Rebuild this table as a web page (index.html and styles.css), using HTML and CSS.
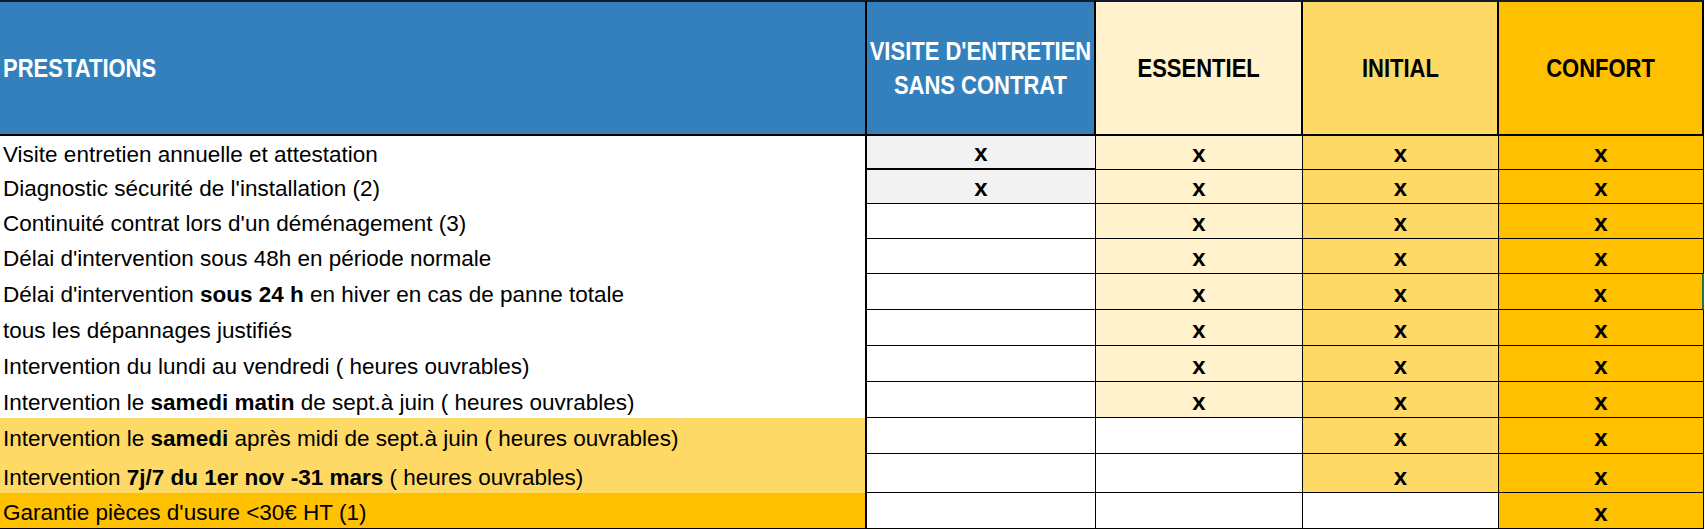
FILE: index.html
```html
<!DOCTYPE html>
<html lang="fr">
<head>
<meta charset="utf-8">
<title>Prestations</title>
<link rel="stylesheet" href="styles.css">
</head>
<body>
<div class="grid">
  <div class="h h-left"><span>PRESTATIONS</span></div>
  <div class="h h-blue"><span>VISITE D'ENTRETIEN<br>SANS CONTRAT</span></div>
  <div class="h ess"><span>ESSENTIEL</span></div>
  <div class="h ini"><span>INITIAL</span></div>
  <div class="h con"><span>CONFORT</span></div>

  <div class="lbl"><span>Visite entretien annuelle et attestation</span></div>
  <div class="c grey first">x</div><div class="c ess">x</div><div class="c ini">x</div><div class="c con">x</div>

  <div class="lbl"><span>Diagnostic sécurité de l'installation (2)</span></div>
  <div class="c grey">x</div><div class="c ess">x</div><div class="c ini">x</div><div class="c con">x</div>

  <div class="lbl"><span>Continuité contrat lors d'un déménagement (3)</span></div>
  <div class="c"></div><div class="c ess">x</div><div class="c ini">x</div><div class="c con">x</div>

  <div class="lbl"><span>Délai d'intervention sous 48h en période normale</span></div>
  <div class="c"></div><div class="c ess">x</div><div class="c ini">x</div><div class="c con">x</div>

  <div class="lbl"><span>Délai d'intervention <b>sous 24 h</b> en hiver en cas de panne totale</span></div>
  <div class="c"></div><div class="c ess">x</div><div class="c ini">x</div><div class="c con sel">x</div>

  <div class="lbl"><span>tous les dépannages justifiés</span></div>
  <div class="c"></div><div class="c ess">x</div><div class="c ini">x</div><div class="c con">x</div>

  <div class="lbl"><span>Intervention du lundi au vendredi ( heures ouvrables)</span></div>
  <div class="c"></div><div class="c ess">x</div><div class="c ini">x</div><div class="c con">x</div>

  <div class="lbl"><span>Intervention le <b>samedi matin</b> de sept.à juin ( heures ouvrables)</span></div>
  <div class="c"></div><div class="c ess">x</div><div class="c ini">x</div><div class="c con">x</div>

  <div class="lbl ini"><span>Intervention le <b>samedi</b> après midi de sept.à juin ( heures ouvrables)</span></div>
  <div class="c"></div><div class="c"></div><div class="c ini">x</div><div class="c con">x</div>

  <div class="lbl ini"><span>Intervention <b>7j/7 du 1er nov -31 mars</b> ( heures ouvrables)</span></div>
  <div class="c"></div><div class="c"></div><div class="c ini">x</div><div class="c con">x</div>

  <div class="lbl con last"><span>Garantie pièces d'usure &lt;30€ HT (1)</span></div>
  <div class="c"></div><div class="c"></div><div class="c"></div><div class="c con">x</div>
</div>
</body>
</html>
```

FILE: styles.css
```css
html, body {
  margin: 0;
  padding: 0;
  background: #ffffff;
}

body {
  font-family: "Liberation Sans", Arial, sans-serif;
  font-size: 22.5px;
  color: #000000;
}

.grid {
  display: grid;
  grid-template-columns: 867px 229px 207px 196px 205px;
  grid-template-rows: 136px 34px 34px 35px 35px 36px 36px 36px 36px 36px 39px 36px;
  width: 1704px;
}

.grid > div {
  box-sizing: border-box;
  white-space: nowrap;
}

/* header */
.h {
  display: flex;
  align-items: center;
  justify-content: center;
  text-align: center;
  font-size: 26.5px;
  font-weight: bold;
  line-height: 34px;
  border-top: 2px solid #101c30;
  border-bottom: 2px solid #000000;
  border-right: 2px solid #000000;
}

.h span {
  display: inline-block;
  transform: scaleX(0.83);
}

.h-left {
  justify-content: flex-start;
  padding-left: 3px;
  background: #3480bd;
  color: #ffffff;
}

.h-left span {
  transform-origin: left center;
}

.h-blue {
  background: #3480bd;
  color: #ffffff;
}

/* label column */
.lbl {
  display: flex;
  align-items: flex-end;
  padding: 0 0 2px 3px;
  border-right: 2px solid #000000;
  background: #ffffff;
}

.lbl.last {
  border-bottom: 1px solid #000000;
}

/* data cells */
.c {
  display: flex;
  align-items: flex-end;
  justify-content: center;
  padding-bottom: 1px;
  font-size: 24px;
  font-weight: bold;
  border-right: 1px solid #000000;
  border-bottom: 1px solid #000000;
  background: #ffffff;
}

.c.first {
  border-bottom-width: 2px;
}

.c.sel {
  border-right: 2px solid #217346;
}

/* fills */
.grey { background: #f2f2f2; }
.ess { background: #fff2cc; }
.ini { background: #ffd966; }
.con { background: #ffc000; }
```
